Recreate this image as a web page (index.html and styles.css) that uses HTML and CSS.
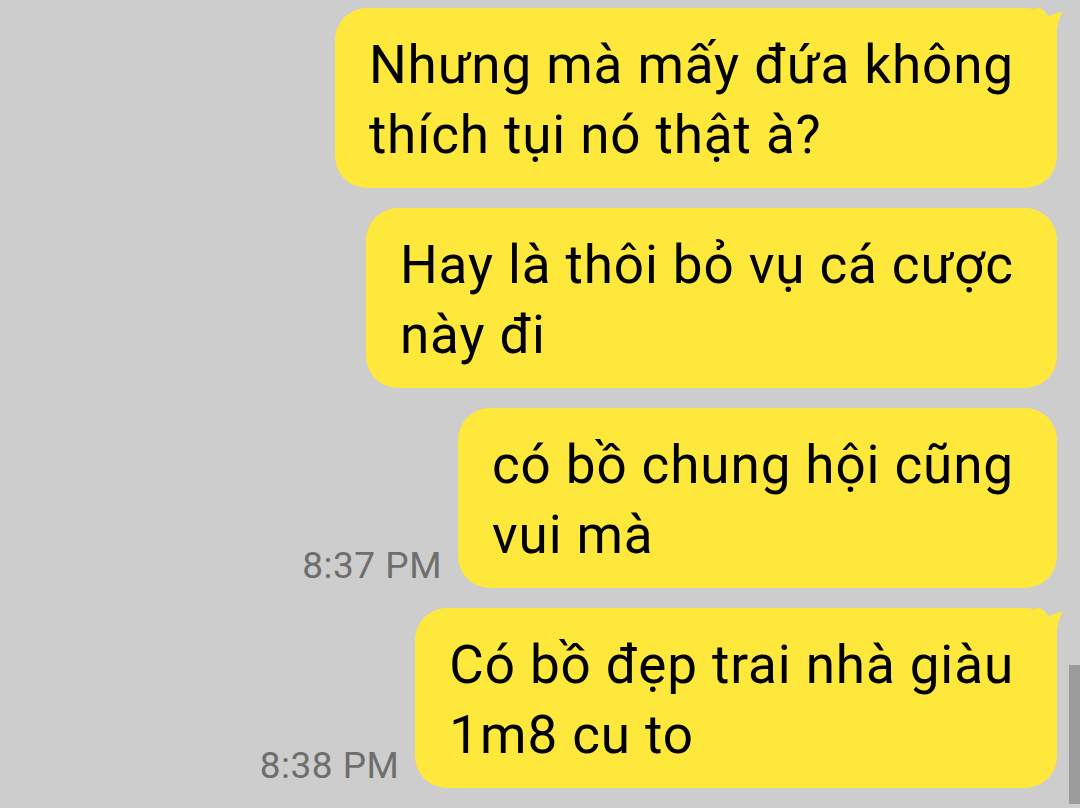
FILE: index.html
```html
<!DOCTYPE html>
<html lang="vi">
<head>
  <meta charset="UTF-8" />
  <meta name="viewport" content="width=device-width, initial-scale=1.0"/>
  <title>Chat</title>
  <link rel="stylesheet" href="styles.css">
</head>
<body>
  <div class="chat">
    <div class="row">
      <div class="bubble tail">Nhưng mà mấy đứa không<br>thích tụi nó thật à?</div>
    </div>
    <div class="row">
      <div class="bubble">Hay là thôi bỏ vụ cá cược<br>này đi</div>
    </div>
    <div class="row">
      <span class="time">8:37 PM</span>
      <div class="bubble">có bồ chung hội cũng<br>vui mà</div>
    </div>
    <div class="row">
      <span class="time">8:38 PM</span>
      <div class="bubble tail">Có bồ đẹp trai nhà giàu<br>1m8 cu to</div>
    </div>
  </div>
  <div class="scrollbar"></div>
</body>
</html>
```

FILE: styles.css
```css
body {
  margin: 0;
  background-color: #cdcdcd;
  font-family: Roboto, 'Noto Sans', sans-serif;
  overflow: hidden;
}
.chat {
  display: flex;
  flex-direction: column;
  gap: 20px;
  padding: 8px 23px 20px 0;
}
.row {
  display: flex;
  justify-content: flex-end;
  align-items: flex-end;
}
.bubble {
  position: relative;
  background-color: #fee83b;
  color: #000;
  font-size: 53px;
  line-height: 70px;
  letter-spacing: 0.9px;
  padding: 22px 43px 18px 34px;
  border-radius: 32px;
  white-space: nowrap;
}
.bubble.tail::after {
  content: '';
  position: absolute;
  top: 0;
  right: -6px;
  width: 28px;
  height: 32px;
  background-color: #fee83b;
  clip-path: path('M0 0 L4 0 Q9 1 13 8 Q20 6 28 3 Q23 12 22 22 L22 32 L0 32 Z');
}
.time {
  font-size: 37px;
  line-height: 1;
  letter-spacing: 0.5px;
  color: #6e6e6e;
  margin: 0 16px 4px 0;
}
.scrollbar {
  position: absolute;
  right: 0;
  top: 665px;
  width: 11px;
  height: 139px;
  background-color: #9b9b9b;
}
```
